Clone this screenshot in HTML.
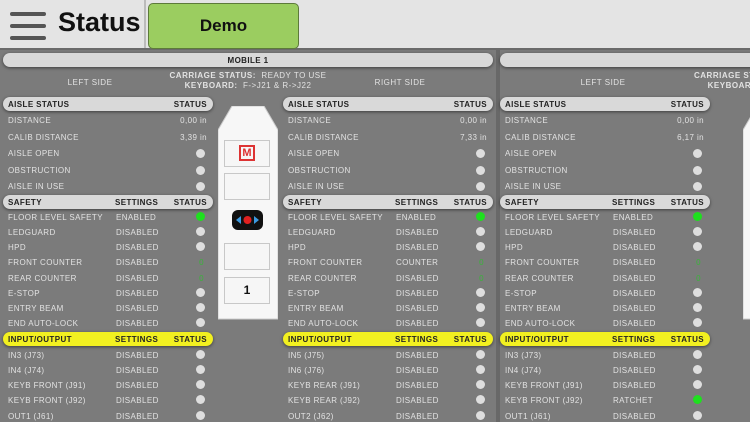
<!DOCTYPE html>
<html><head><meta charset="utf-8"><style>
*{margin:0;padding:0;box-sizing:border-box}
html{overflow:hidden}
body{width:750px;height:422px;overflow:hidden;background:#7b7b7b;font-family:"Liberation Sans",sans-serif;position:relative}
#wrap{position:absolute;left:0;top:0;width:750px;height:422px;overflow:hidden}
.a{position:absolute}
#top{left:0;top:0;width:750px;height:50px;background:#e4e4e4;border-bottom:2px solid #6a6a6a}
.bar{position:absolute;left:10px;width:36px;height:4px;border-radius:2px;background:#555}
.pill{position:absolute;height:14px;border-radius:7px;background:#d9d9d9;box-shadow:0 1px 3px rgba(0,0,0,.5);font-size:8px;font-weight:bold;letter-spacing:.4px;color:#222;line-height:15px}
.yel{background:#f2f020}
.side{position:absolute;width:210px;font-size:8px;letter-spacing:.4px;color:#e2e2e2}
.r{position:relative;white-space:nowrap}
.r span{position:absolute;top:1px}
.l{left:5px}.s{left:113px}.v{right:6px}
.d{position:absolute;right:8px;width:9px;height:9px;border-radius:50%;background:#dedede}
.g{background:#1ee01e}
.z{color:#3ab43a}
.ar{height:16.5px;line-height:16.5px}.ar .d{top:4px}
.sr{height:15.25px;line-height:15.25px}.sr .d{top:3px}
.h span{position:absolute}
.box{position:absolute;left:6px;width:46px;height:27px;background:#f6f6f6;border:1.5px solid #c8c8c8}
.ctxt{font-size:8px;letter-spacing:.5px;color:#e2e2e2;font-weight:bold;text-align:center;line-height:10px}
</style></head><body><div id="wrap">
<div id="top" class="a">
 <div class="bar" style="top:12px"></div><div class="bar" style="top:24px"></div><div class="bar" style="top:36px"></div>
 <div class="a" style="left:58px;top:7px;font-size:27px;font-weight:bold;color:#111">Status</div>
 <div class="a" style="left:144px;top:0;width:2px;height:48px;background:#bbb"></div>
 <div class="a" style="left:148px;top:3px;width:151px;height:46px;background:#9bcd60;border:1px solid #5d7a3a;border-radius:5px;text-align:center;line-height:44px;font-size:17px;font-weight:bold;color:#111">Demo</div>
</div>
<div class="a" style="left:496px;top:50px;width:4px;height:372px;background:#686868"></div>
<div class="pill" style="left:3px;top:53px;width:490px;text-align:center">MOBILE 1</div>
<div class="pill" style="left:500px;top:53px;width:260px"></div>
<div class="a ctxt" style="left:40px;top:78px;width:100px;font-weight:normal">LEFT SIDE</div>
<div class="a ctxt" style="left:350px;top:78px;width:100px;font-weight:normal">RIGHT SIDE</div>
<div class="a ctxt" style="left:553px;top:78px;width:100px;font-weight:normal">LEFT SIDE</div>
<div class="a ctxt" style="left:148px;top:71px;width:200px">CARRIAGE STATUS: <span style="font-weight:normal">&nbsp;READY TO USE</span><br>KEYBOARD: <span style="font-weight:normal">&nbsp;F-&gt;J21 &amp; R-&gt;J22</span></div>
<div class="a ctxt" style="left:694px;top:71px;width:200px;text-align:left">CARRIAGE STATUS:<br>&nbsp;&nbsp;&nbsp;&nbsp;&nbsp;KEYBOARD:</div>

<div class="a" style="left:218px;top:106px;width:60px;height:214px">
 <svg class="a" style="left:0;top:0" width="60" height="214"><path d="M14 0H46L60 24V213H0V24Z" fill="#f7f7f7" stroke="#ccc"/></svg>
 <div class="box" style="top:34px;text-align:center"><span style="display:inline-block;margin-top:4px;width:16px;height:16px;border:2px solid #d33;color:#d33;font-weight:bold;font-size:11px;line-height:12px">M</span></div>
 <div class="box" style="top:67px"></div>
 <div class="a" style="left:14px;top:104px;width:31px;height:20px;background:#111;border-radius:6px"><svg width="31" height="20"><path d="M4 10L9 6V14Z M27 10L22 6V14Z" fill="#3c9ae0"/><circle cx="15.5" cy="10" r="4" fill="#e02020"/></svg></div>
 <div class="box" style="top:137px"></div>
 <div class="box" style="top:171px;text-align:center;font-weight:bold;font-size:12px;line-height:24px;color:#111">1</div>
</div>
<div class="a" style="left:743px;top:106px;width:60px;height:214px">
 <svg class="a" width="60" height="214"><path d="M14 0H46L60 24V213H0V24Z" fill="#f7f7f7" stroke="#ccc"/></svg>
</div>

<div class="side" style="left:3px;top:97px">
 <div class="pill h" style="position:relative;width:210px"><span class="l">AISLE STATUS</span><span class="v">STATUS</span></div>
 <div style="height:1px"></div>
 <div class="r ar"><span class="l">DISTANCE</span><span class="v">0,00 in</span></div>
 <div class="r ar"><span class="l">CALIB DISTANCE</span><span class="v">3,39 in</span></div>
 <div class="r ar"><span class="l">AISLE OPEN</span><i class="d"></i></div>
 <div class="r ar"><span class="l">OBSTRUCTION</span><i class="d"></i></div>
 <div class="r ar"><span class="l">AISLE IN USE</span><i class="d"></i></div>
 <div class="pill h" style="position:relative;width:210px;margin-top:0px"><span class="l">SAFETY</span><span style="left:112px">SETTINGS</span><span class="v">STATUS</span></div>
 <div class="r sr"><span class="l">FLOOR LEVEL SAFETY</span><span class="s">ENABLED</span><i class="d g"></i></div>
 <div class="r sr"><span class="l">LEDGUARD</span><span class="s">DISABLED</span><i class="d"></i></div>
 <div class="r sr"><span class="l">HPD</span><span class="s">DISABLED</span><i class="d"></i></div>
 <div class="r sr"><span class="l">FRONT COUNTER</span><span class="s">DISABLED</span><span class="z" style="right:9px">0</span></div>
 <div class="r sr"><span class="l">REAR COUNTER</span><span class="s">DISABLED</span><span class="z" style="right:9px">0</span></div>
 <div class="r sr"><span class="l">E-STOP</span><span class="s">DISABLED</span><i class="d"></i></div>
 <div class="r sr"><span class="l">ENTRY BEAM</span><span class="s">DISABLED</span><i class="d"></i></div>
 <div class="r sr"><span class="l">END AUTO-LOCK</span><span class="s">DISABLED</span><i class="d"></i></div>
 <div class="pill h yel" style="position:relative;width:210px;margin-top:1px"><span class="l">INPUT/OUTPUT</span><span style="left:112px">SETTINGS</span><span class="v">STATUS</span></div>
 <div style="height:1px"></div>
 <div class="r sr"><span class="l">IN3 (J73)</span><span class="s">DISABLED</span><i class="d"></i></div>
 <div class="r sr"><span class="l">IN4 (J74)</span><span class="s">DISABLED</span><i class="d"></i></div>
 <div class="r sr"><span class="l">KEYB FRONT (J91)</span><span class="s">DISABLED</span><i class="d"></i></div>
 <div class="r sr"><span class="l">KEYB FRONT (J92)</span><span class="s">DISABLED</span><i class="d"></i></div>
 <div class="r sr"><span class="l">OUT1 (J61)</span><span class="s">DISABLED</span><i class="d"></i></div>
</div>

<div class="side" style="left:283px;top:97px">
 <div class="pill h" style="position:relative;width:210px"><span class="l">AISLE STATUS</span><span class="v">STATUS</span></div>
 <div style="height:1px"></div>
 <div class="r ar"><span class="l">DISTANCE</span><span class="v">0,00 in</span></div>
 <div class="r ar"><span class="l">CALIB DISTANCE</span><span class="v">7,33 in</span></div>
 <div class="r ar"><span class="l">AISLE OPEN</span><i class="d"></i></div>
 <div class="r ar"><span class="l">OBSTRUCTION</span><i class="d"></i></div>
 <div class="r ar"><span class="l">AISLE IN USE</span><i class="d"></i></div>
 <div class="pill h" style="position:relative;width:210px;margin-top:0px"><span class="l">SAFETY</span><span style="left:112px">SETTINGS</span><span class="v">STATUS</span></div>
 <div class="r sr"><span class="l">FLOOR LEVEL SAFETY</span><span class="s">ENABLED</span><i class="d g"></i></div>
 <div class="r sr"><span class="l">LEDGUARD</span><span class="s">DISABLED</span><i class="d"></i></div>
 <div class="r sr"><span class="l">HPD</span><span class="s">DISABLED</span><i class="d"></i></div>
 <div class="r sr"><span class="l">FRONT COUNTER</span><span class="s">COUNTER</span><span class="z" style="right:9px">0</span></div>
 <div class="r sr"><span class="l">REAR COUNTER</span><span class="s">DISABLED</span><span class="z" style="right:9px">0</span></div>
 <div class="r sr"><span class="l">E-STOP</span><span class="s">DISABLED</span><i class="d"></i></div>
 <div class="r sr"><span class="l">ENTRY BEAM</span><span class="s">DISABLED</span><i class="d"></i></div>
 <div class="r sr"><span class="l">END AUTO-LOCK</span><span class="s">DISABLED</span><i class="d"></i></div>
 <div class="pill h yel" style="position:relative;width:210px;margin-top:1px"><span class="l">INPUT/OUTPUT</span><span style="left:112px">SETTINGS</span><span class="v">STATUS</span></div>
 <div style="height:1px"></div>
 <div class="r sr"><span class="l">IN5 (J75)</span><span class="s">DISABLED</span><i class="d"></i></div>
 <div class="r sr"><span class="l">IN6 (J76)</span><span class="s">DISABLED</span><i class="d"></i></div>
 <div class="r sr"><span class="l">KEYB REAR (J91)</span><span class="s">DISABLED</span><i class="d"></i></div>
 <div class="r sr"><span class="l">KEYB REAR (J92)</span><span class="s">DISABLED</span><i class="d"></i></div>
 <div class="r sr"><span class="l">OUT2 (J62)</span><span class="s">DISABLED</span><i class="d"></i></div>
</div>

<div class="side" style="left:500px;top:97px">
 <div class="pill h" style="position:relative;width:210px"><span class="l">AISLE STATUS</span><span class="v">STATUS</span></div>
 <div style="height:1px"></div>
 <div class="r ar"><span class="l">DISTANCE</span><span class="v">0,00 in</span></div>
 <div class="r ar"><span class="l">CALIB DISTANCE</span><span class="v">6,17 in</span></div>
 <div class="r ar"><span class="l">AISLE OPEN</span><i class="d"></i></div>
 <div class="r ar"><span class="l">OBSTRUCTION</span><i class="d"></i></div>
 <div class="r ar"><span class="l">AISLE IN USE</span><i class="d"></i></div>
 <div class="pill h" style="position:relative;width:210px;margin-top:0px"><span class="l">SAFETY</span><span style="left:112px">SETTINGS</span><span class="v">STATUS</span></div>
 <div class="r sr"><span class="l">FLOOR LEVEL SAFETY</span><span class="s">ENABLED</span><i class="d g"></i></div>
 <div class="r sr"><span class="l">LEDGUARD</span><span class="s">DISABLED</span><i class="d"></i></div>
 <div class="r sr"><span class="l">HPD</span><span class="s">DISABLED</span><i class="d"></i></div>
 <div class="r sr"><span class="l">FRONT COUNTER</span><span class="s">DISABLED</span><span class="z" style="right:9px">0</span></div>
 <div class="r sr"><span class="l">REAR COUNTER</span><span class="s">DISABLED</span><span class="z" style="right:9px">0</span></div>
 <div class="r sr"><span class="l">E-STOP</span><span class="s">DISABLED</span><i class="d"></i></div>
 <div class="r sr"><span class="l">ENTRY BEAM</span><span class="s">DISABLED</span><i class="d"></i></div>
 <div class="r sr"><span class="l">END AUTO-LOCK</span><span class="s">DISABLED</span><i class="d"></i></div>
 <div class="pill h yel" style="position:relative;width:210px;margin-top:1px"><span class="l">INPUT/OUTPUT</span><span style="left:112px">SETTINGS</span><span class="v">STATUS</span></div>
 <div style="height:1px"></div>
 <div class="r sr"><span class="l">IN3 (J73)</span><span class="s">DISABLED</span><i class="d"></i></div>
 <div class="r sr"><span class="l">IN4 (J74)</span><span class="s">DISABLED</span><i class="d"></i></div>
 <div class="r sr"><span class="l">KEYB FRONT (J91)</span><span class="s">DISABLED</span><i class="d"></i></div>
 <div class="r sr"><span class="l">KEYB FRONT (J92)</span><span class="s">RATCHET</span><i class="d g"></i></div>
 <div class="r sr"><span class="l">OUT1 (J61)</span><span class="s">DISABLED</span><i class="d"></i></div>
</div>
</div></body></html>
